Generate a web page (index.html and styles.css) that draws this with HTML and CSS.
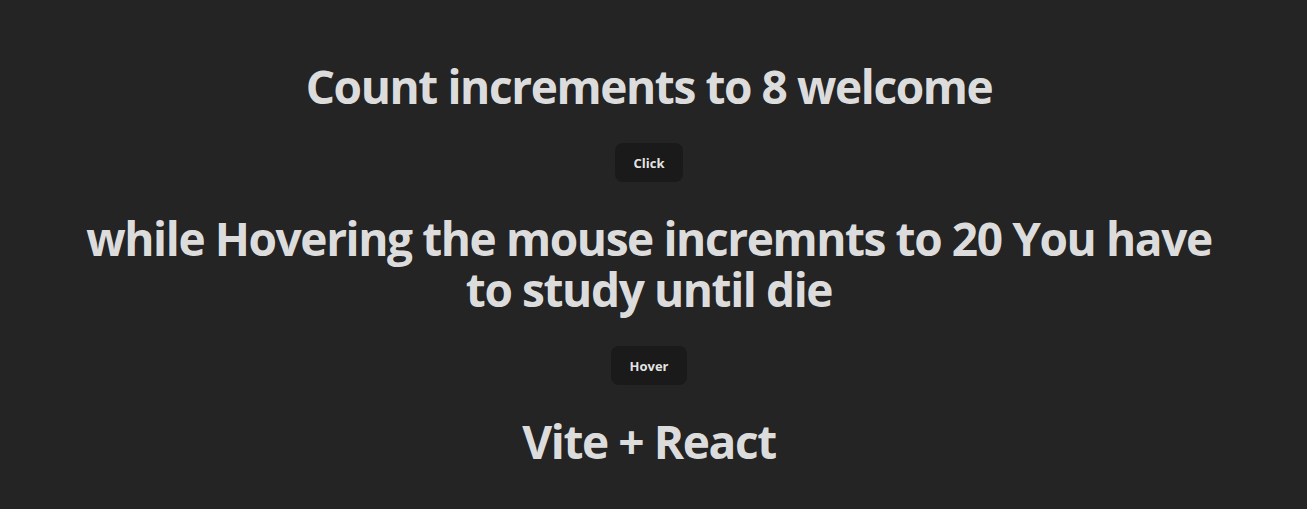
FILE: index.html
```html
<!DOCTYPE html>
<html lang="en">
<head>
<meta charset="UTF-8">
<title>Vite + React</title>
<link rel="stylesheet" href="styles.css">
</head>
<body>
<div class="root">
  <h1 class="title">Count increments to 8 welcome</h1>
  <button class="btn">Click</button>
  <h1 class="title">while Hovering the mouse incremnts to 20 You have to study until die</h1>
  <button class="btn">Hover</button>
  <h1 class="title">Vite + React</h1>
</div>
</body>
</html>
```
FILE: styles.css
```css
html, body {
  margin: 0;
  padding: 0;
}
body {
  background: #242424;
  color: rgba(255, 255, 255, 0.87);
  font-family: "Open Sans", "Noto Sans", "Liberation Sans", sans-serif;
  min-height: 100vh;
}
.root {
  display: flex;
  flex-direction: column;
  align-items: center;
  gap: 31px;
  padding: 61px 9px 0 0;
  text-align: center;
}
.title {
  margin: 0;
  font-size: 46px;
  line-height: 51px;
  font-weight: 700;
  letter-spacing: -1.4px;
  max-width: 1165px;
}
.btn {
  font-family: "Open Sans", "Noto Sans", "Liberation Sans", sans-serif;
  font-size: 13px;
  font-weight: 700;
  line-height: 18px;
  padding: 9.5px 18px;
  border: 1px solid transparent;
  border-radius: 8px;
  background: #1a1a1a;
  color: rgba(255, 255, 255, 0.9);
  cursor: pointer;
}
```
